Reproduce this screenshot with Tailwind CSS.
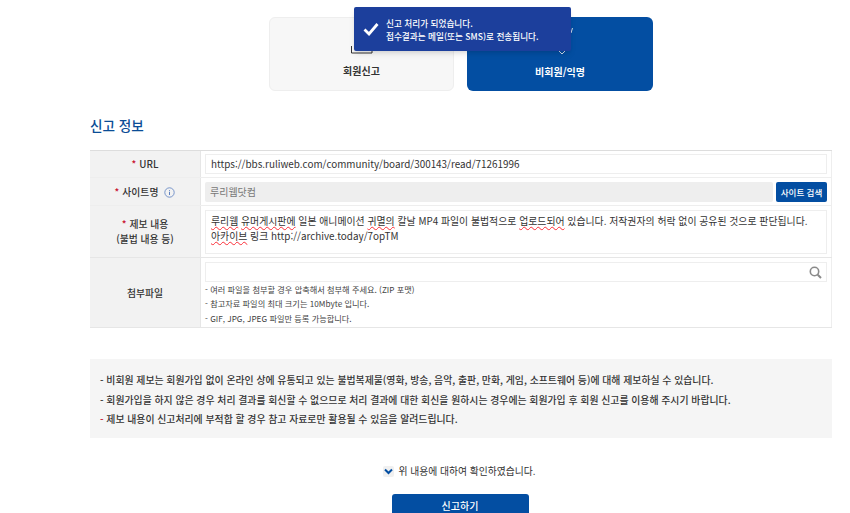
<!DOCTYPE html>
<html lang="ko"><head><meta charset="utf-8">
<script src="https://cdn.jsdelivr.net/npm/@tailwindcss/browser@4"></script>
</head>
<body class="bg-white overflow-hidden font-['Noto_Sans_CJK_KR','Noto_Sans',sans-serif] text-[#333]">
<div class="relative w-[850px] h-[513px] overflow-hidden">
  <!-- toast -->
  <div class="absolute left-[354px] top-[7px] w-[217px] h-[44px] bg-[#1c3f9c] rounded-[2px] shadow-md flex items-center text-white z-10">
    <svg class="ml-[9px] w-[16px] h-[14px]" viewBox="0 0 16 14" fill="none"><path d="M1.5 7.5 L6 12 L14.5 2" stroke="#fff" stroke-width="2.8"/></svg>
    <div class="ml-[7px] text-[8.65px] font-medium leading-[13px] pt-[1px]"><p>신고 처리가 되었습니다.</p><p>접수결과는 메일(또는 SMS)로 전송됩니다.</p></div>
  </div>

  <div class="ml-[90px] w-[742px] pt-[17px]">
    <!-- tabs -->
    <div class="flex justify-center gap-[13px]">
      <div class="relative w-[185px] h-[74px] rounded-[6px] bg-[#f7f7f7] border border-[#eeeeee] flex flex-col items-center text-[#333]">
        <svg class="absolute left-[80px] top-[28px] w-[24px] h-[8px]" viewBox="0 0 24 8" fill="none"><path d="M1.5 0 V7 H22 V4 H7" stroke="#333" stroke-width="1"/></svg>
        <span class="mt-[44px] text-[10px] font-bold leading-[18px]">회원신고</span>
      </div>
      <div class="relative w-[186px] h-[74px] rounded-[6px] bg-[#034ea2] flex flex-col items-center text-white">
        <svg class="absolute left-[90px] top-[32px] w-[10px] h-[7px]" viewBox="0 0 10 7" fill="none"><path d="M1 1 L5 5 L9 1" stroke="#cfd9e8" stroke-width="1"/></svg>
        <svg class="absolute left-[103px] top-[11px] w-[3px] h-[5px]" viewBox="0 0 3 5" fill="none"><path d="M2.5 0 L1 5" stroke="#cfd9e8" stroke-width="1"/></svg>
        <span class="mt-[46px] text-[10px] font-bold leading-[18px]">비회원/익명</span>
      </div>
    </div>

    <h2 class="mt-[24px] text-[13.6px] font-medium leading-[20px] text-[#0a4d96]">신고 정보</h2>

    <!-- form table -->
    <div class="mt-[15px] border-t border-t-[#dddddd] border-b border-b-[#e6e6e6] text-[9.8px]">
      <div class="flex h-[27px] border-b border-[#eeeeee]">
        <div class="w-[111px] shrink-0 pt-[1px] bg-[#f2f2f2] border-r border-[#e6e6e6] flex items-center justify-center font-medium"><span class="text-[#c8102e] mr-[3px]">*</span>URL</div>
        <div class="flex-1 min-w-0 border-r border-[#eeeeee] pl-[4px] pr-[4px] flex items-center">
          <div class="w-full h-[20px] border border-[#eeeeee] pl-[5px] text-[9.9px] leading-[18px] text-[#333]">https://bbs.ruliweb.com/community/board/300143/read/71261996</div>
        </div>
      </div>
      <div class="flex h-[28px] border-b border-[#eeeeee]">
        <div class="w-[111px] shrink-0 pt-[2px] bg-[#f2f2f2] border-r border-[#e6e6e6] flex items-center justify-center font-medium"><span class="text-[#c8102e] mr-[3px]">*</span>사이트명
          <svg class="ml-[6px] w-[11px] h-[11px]" viewBox="0 0 11 11" fill="none"><circle cx="5.5" cy="5.5" r="4.7" stroke="#5b7fc0" stroke-width=".8"/><path d="M5.5 3v.8M5.5 4.8v3.2" stroke="#5b7fc0"/></svg>
        </div>
        <div class="flex-1 min-w-0 border-r border-[#eeeeee] pl-[4px] pr-[4px] flex items-center gap-[3px]">
          <div class="flex-1 h-[20px] bg-[#eeeeee] rounded-[2px] pl-[5px] text-[10px] leading-[20px] text-[#777]">루리웹닷컴</div>
          <div class="w-[51px] h-[20px] bg-[#034ea2] rounded-[2px] text-white text-[8.5px] font-medium leading-[20px] text-center">사이트 검색</div>
        </div>
      </div>
      <div class="flex h-[52px] border-b border-[#e6e6e6]">
        <div class="w-[111px] shrink-0 bg-[#f2f2f2] border-r border-[#e6e6e6] flex flex-col items-center justify-center font-medium leading-[15px]"><p><span class="text-[#c8102e] mr-[3px]">*</span>제보 내용</p><p>(불법 내용 등)</p></div>
        <div class="flex-1 min-w-0 border-r border-[#eeeeee] pl-[4px] pr-[4px] flex items-center">
          <div class="w-full h-[44px] border border-[#eeeeee] pl-[5px] pt-[3px] text-[9.9px] leading-[15px] text-[#333] whitespace-nowrap overflow-hidden"><p><span class="underline decoration-wavy decoration-red-500 decoration-1">루리웹</span> <span class="underline decoration-wavy decoration-red-500 decoration-1">유머게시판에</span> 일본 애니메이션 <span class="underline decoration-wavy decoration-red-500 decoration-1">귀멸의</span> 칼날 MP4 파일이 불법적으로 <span class="underline decoration-wavy decoration-red-500 decoration-1">업로드되어</span> 있습니다. 저작권자의 허락 없이 공유된 것으로 판단됩니다.</p><p><span class="underline decoration-wavy decoration-red-500 decoration-1">아카이브</span> 링크 http://archive.today/7opTM</p></div>
        </div>
      </div>
      <div class="flex h-[69px]">
        <div class="w-[111px] shrink-0 pt-[2px] bg-[#f2f2f2] border-r border-[#e6e6e6] flex items-center justify-center font-medium">첨부파일</div>
        <div class="flex-1 min-w-0 border-r border-[#eeeeee] pl-[4px] pr-[4px] pt-[4px]">
          <div class="relative w-full h-[20px] border border-[#eeeeee]">
            <svg class="absolute right-[4px] top-[3px] w-[13px] h-[13px]" viewBox="0 0 13 13" fill="none"><circle cx="5.5" cy="5.5" r="4.2" stroke="#8a8a8a" stroke-width="1.6"/><path d="M8.7 8.7 L12 12" stroke="#8a8a8a" stroke-width="2"/></svg>
          </div>
          <div class="text-[8.2px] leading-[14.4px] text-[#444]">
            <p>- 여러 파일을 첨부할 경우 압축해서 첨부해 주세요. (ZIP 포맷)</p>
            <p>- 참고자료 파일의 최대 크기는 10Mbyte 입니다.</p>
            <p>- GIF, JPG, JPEG 파일만 등록 가능합니다.</p>
          </div>
        </div>
      </div>
    </div>

    <!-- notes -->
    <div class="mt-[31px] h-[79px] bg-[#f5f5f5] pl-[10px] pt-[12px] text-[9.9px] font-medium leading-[19.7px] text-[#333]">
      <p>- 비회원 제보는 회원가입 없이 온라인 상에 유통되고 있는 불법복제물(영화, 방송, 음악, 출판, 만화, 게임, 소프트웨어 등)에 대해 제보하실 수 있습니다.</p>
      <p>- 회원가입을 하지 않은 경우 처리 결과를 회신할 수 없으므로 처리 결과에 대한 회신을 원하시는 경우에는 회원가입 후 회원 신고를 이용해 주시기 바랍니다.</p>
      <p><span class="text-[#c8102e]">-</span> 제보 내용이 신고처리에 부적합 할 경우 참고 자료로만 활용될 수 있음을 알려드립니다.</p>
    </div>

    <div class="mt-[25px] flex items-center justify-center gap-[3px] h-[16px] pr-[3px] text-[9.8px] text-[#333]">
      <span class="w-[11px] h-[11px] bg-[#f0f0f0] rounded-[2px] flex items-center justify-center"><svg class="w-[9px] h-[7px]" viewBox="0 0 9 7" fill="none"><path d="M1 1.5 L4.5 5 L8 1.5" stroke="#034ea2" stroke-width="2"/></svg></span>
      <span class="ml-[1px]">위 내용에 대하여 확인하였습니다.</span>
    </div>

    <div class="mt-[15px] flex justify-center pr-[2px]">
      <div class="w-[137px] h-[40px] bg-[#034ea2] rounded-t-[3px] text-white text-[10px] font-medium text-center pt-[4px] leading-[16px]">신고하기</div>
    </div>
  </div>
</div>
</body></html>
